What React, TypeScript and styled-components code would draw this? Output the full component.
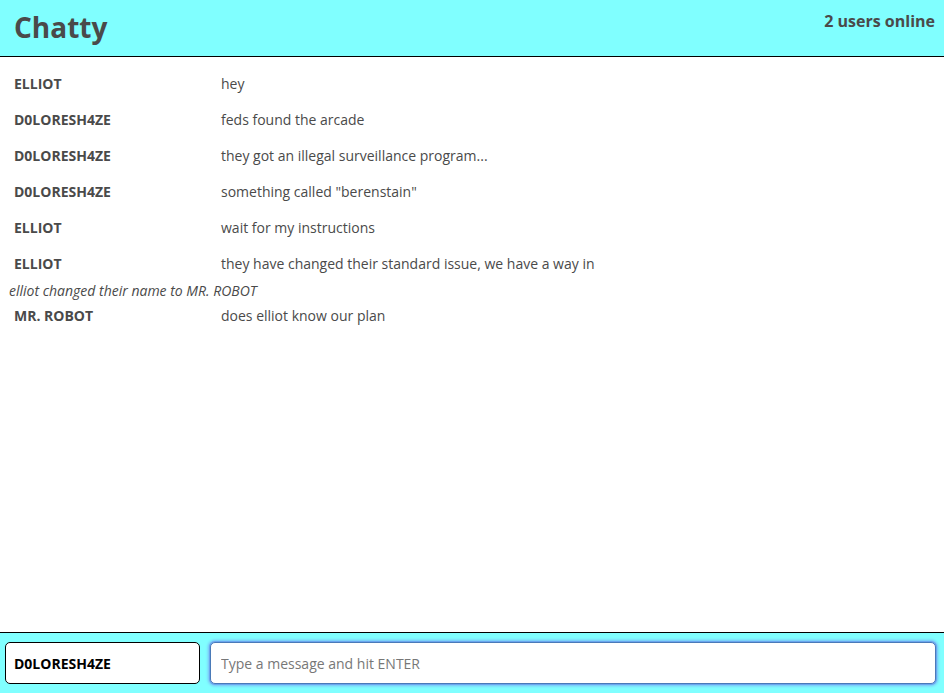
import React from "react";
import styled, { createGlobalStyle } from "styled-components";

const Global = createGlobalStyle`
  html, body { margin: 0; padding: 0; height: 100%; }
  body { font-family: "Open Sans", "Liberation Sans", sans-serif; color: #4a4a4a; background: #fff; }
  #root { height: 100%; }
  * { box-sizing: border-box; }
`;

const Page = styled.div`
  display: flex;
  flex-direction: column;
  height: 693px;
  width: 944px;
`;

const NavBar = styled.header`
  height: 57px;
  background: #80ffff;
  border-bottom: 1px solid #000;
  display: flex;
  justify-content: space-between;
  align-items: flex-start;
  padding: 0 9px 0 14px;
  flex-shrink: 0;
`;

const Brand = styled.h1`
  margin: 0;
  font-size: 28px;
  font-weight: 700;
  line-height: 54px;
  color: #4a4a4a;
`;

const Online = styled.span`
  font-size: 16px;
  font-weight: 700;
  line-height: 20px;
  margin-top: 11px;
`;

const Messages = styled.main`
  flex: 1;
  padding: 9px 0 0 0;
  overflow: hidden;
`;

const Row = styled.div`
  display: flex;
  align-items: center;
  height: 36px;
  padding-left: 14px;
  font-size: 14px;
  line-height: 20px;
`;

const User = styled.span`
  width: 207px;
  font-weight: 700;
  text-transform: uppercase;
  flex-shrink: 0;
`;

const Content = styled.span``;

const System = styled.div`
  height: 16px;
  display: flex;
  align-items: center;
  padding-left: 9px;
  font-size: 14px;
  font-style: italic;
`;

const Footer = styled.footer`
  height: 61px;
  background: #80ffff;
  border-top: 1px solid #000;
  display: flex;
  align-items: center;
  gap: 10px;
  padding: 0 8px 0 5px;
  flex-shrink: 0;
`;

const NameInput = styled.input`
  width: 195px;
  height: 42px;
  border: 1px solid #000;
  border-radius: 5px;
  background: #fff;
  font-family: "Open Sans", "Liberation Sans", sans-serif;
  font-size: 14px;
  font-weight: 700;
  color: #000;
  padding: 0 8px;
  outline: none;
`;

const MessageInput = styled.input`
  flex: 1;
  height: 42px;
  border: 1px solid #4a7ab8;
  border-radius: 5px;
  background: #fff;
  font-family: "Open Sans", "Liberation Sans", sans-serif;
  font-size: 14px;
  padding: 0 10px;
  outline: none;
  box-shadow: 0 0 0 1px #6aa6ee, 0 0 3px 2px #7ab8f5;
  &::placeholder { color: #777; }
`;

type Msg = { type: "msg"; user: string; text: string } | { type: "sys"; text: string };

const data: Msg[] = [
  { type: "msg", user: "Elliot", text: "hey" },
  { type: "msg", user: "D0loresH4ze", text: "feds found the arcade" },
  { type: "msg", user: "D0loresH4ze", text: "they got an illegal surveillance program..." },
  { type: "msg", user: "D0loresH4ze", text: 'something called "berenstain"' },
  { type: "msg", user: "Elliot", text: "wait for my instructions" },
  { type: "msg", user: "Elliot", text: "they have changed their standard issue, we have a way in" },
  { type: "sys", text: "elliot changed their name to MR. ROBOT" },
  { type: "msg", user: "Mr. Robot", text: "does elliot know our plan" },
];

export default function App() {
  return (
    <Page>
      <Global />
      <NavBar>
        <Brand>Chatty</Brand>
        <Online>2 users online</Online>
      </NavBar>
      <Messages>
        {data.map((m, i) =>
          m.type === "msg" ? (
            <Row key={i}>
              <User>{m.user}</User>
              <Content>{m.text}</Content>
            </Row>
          ) : (
            <System key={i}>{m.text}</System>
          )
        )}
      </Messages>
      <Footer>
        <NameInput defaultValue="D0LORESH4ZE" />
        <MessageInput placeholder="Type a message and hit ENTER" />
      </Footer>
    </Page>
  );
}
